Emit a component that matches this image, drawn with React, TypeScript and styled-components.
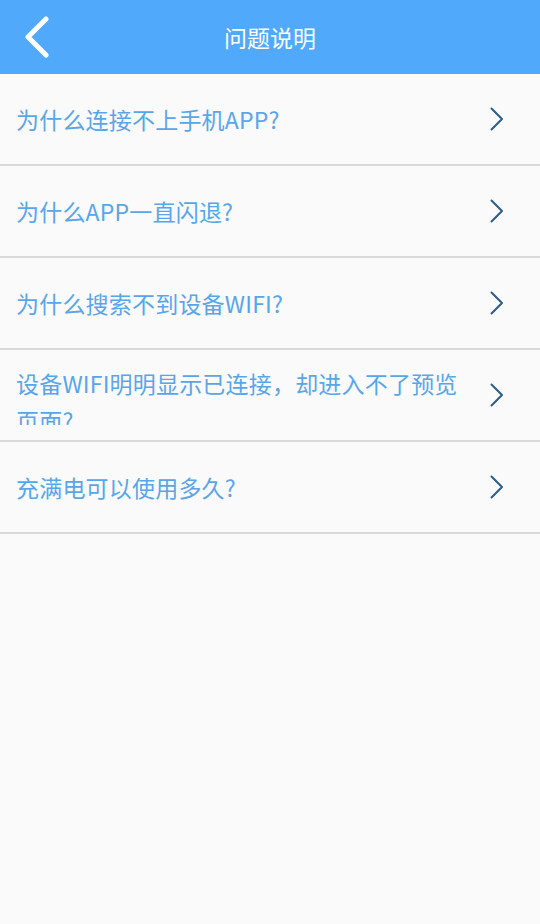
import React from "react";
import styled, { createGlobalStyle } from "styled-components";

const Global = createGlobalStyle`
  html, body { margin: 0; padding: 0; background: #fafafa; }
  body { font-family: "Noto Sans CJK SC", "Noto Sans", sans-serif; }
  * { box-sizing: border-box; }
`;

const Page = styled.div`
  width: 540px;
  min-height: 924px;
  background: #fafafa;
  display: flex;
  flex-direction: column;
`;

const Header = styled.header`
  height: 74px;
  background: #51a9fc;
  display: grid;
  grid-template-columns: 74px 1fr 74px;
  align-items: center;
`;

const BackButton = styled.button`
  border: none;
  background: transparent;
  padding: 0 0 0 22px;
  height: 74px;
  display: flex;
  align-items: center;
  cursor: pointer;
`;

const Title = styled.h1`
  margin: 0;
  text-align: center;
  color: #ffffff;
  font-size: 23px;
  font-weight: 400;
  line-height: 74px;
`;

const List = styled.ul`
  list-style: none;
  margin: 0;
  padding: 0;
`;

const Row = styled.li`
  height: 92px;
  border-bottom: 2px solid #d9d9d9;
  display: flex;
  align-items: center;
  padding: 0 36px 0 16px;
  gap: 20px;
`;

const Question = styled.span`
  flex: 1;
  color: #58a6ea;
  font-size: 23px;
  line-height: 37px;
  max-height: 60px;
  overflow: hidden;
  letter-spacing: 0.2px;
`;

const Chevron = () => (
  <svg width="14" height="24" viewBox="0 0 14 24">
    <path d="M1.5 1.5 L12 12 L1.5 22.5" fill="none" stroke="#2c5c88" strokeWidth="2" strokeLinecap="round" strokeLinejoin="round" />
  </svg>
);

const BackIcon = () => (
  <svg width="30" height="42" viewBox="0 0 30 42">
    <path d="M24 3 L6 21 L24 39" fill="none" stroke="#ffffff" strokeWidth="5" strokeLinecap="round" strokeLinejoin="round" />
  </svg>
);

const questions = [
  "为什么连接不上手机APP?",
  "为什么APP一直闪退?",
  "为什么搜索不到设备WIFI?",
  "设备WIFI明明显示已连接，却进入不了预览页面?",
  "充满电可以使用多久?",
];

export default function App() {
  return (
    <Page>
      <Global />
      <Header>
        <BackButton aria-label="back">
          <BackIcon />
        </BackButton>
        <Title>问题说明</Title>
        <span />
      </Header>
      <List>
        {questions.map((q) => (
          <Row key={q}>
            <Question>{q}</Question>
            <Chevron />
          </Row>
        ))}
      </List>
    </Page>
  );
}
